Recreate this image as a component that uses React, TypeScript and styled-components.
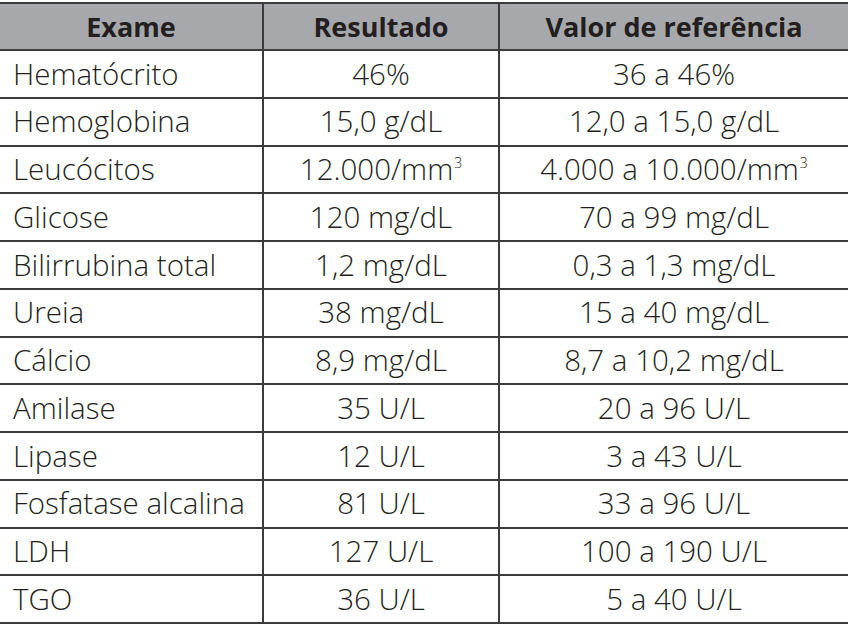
import React from "react";
import styled, { createGlobalStyle } from "styled-components";

const Global = createGlobalStyle`
  html, body { margin: 0; padding: 0; background: #ffffff; }
  body { font-family: "Open Sans", "Noto Sans", sans-serif; }
`;

const Page = styled.div`
  padding-top: 2px;
`;

const Table = styled.table`
  width: 848px;
  border-collapse: collapse;
  table-layout: fixed;
  color: #231f20;
`;

const HeadCell = styled.th`
  background: #a7a8ab;
  font-size: 27px;
  font-weight: 700;
  height: 45px;
  padding: 0;
  text-align: center;
  border-top: 2px solid #3b3b3b;
  border-bottom: 2px solid #3b3b3b;
  & + & { border-left: 2px solid #3b3b3b; }
`;

const Cell = styled.td<{ $left?: boolean }>`
  height: 45.75px;
  padding: 0 0 0 ${(p) => (p.$left ? "13px" : "0")};
  text-align: ${(p) => (p.$left ? "left" : "center")};
  font-size: 29.5px;
  font-weight: 300;
  line-height: 1.3;
  border-bottom: 2px solid #3b3b3b;
  & + & { border-left: 2px solid #3b3b3b; }
  white-space: nowrap;
`;

const Sup = styled.sup`
  font-size: 14px;
  vertical-align: 12px;
  line-height: 0;
  margin-left: 1px;
`;

const rows: [string, React.ReactNode, React.ReactNode][] = [
  ["Hematócrito", "46%", "36 a 46%"],
  ["Hemoglobina", "15,0 g/dL", "12,0 a 15,0 g/dL"],
  [
    "Leucócitos",
    <>12.000/mm<Sup>3</Sup></>,
    <>4.000 a 10.000/mm<Sup>3</Sup></>,
  ],
  ["Glicose", "120 mg/dL", "70 a 99 mg/dL"],
  ["Bilirrubina total", "1,2 mg/dL", "0,3 a 1,3 mg/dL"],
  ["Ureia", "38 mg/dL", "15 a 40 mg/dL"],
  ["Cálcio", "8,9 mg/dL", "8,7 a 10,2 mg/dL"],
  ["Amilase", "35 U/L", "20 a 96 U/L"],
  ["Lipase", "12 U/L", "3 a 43 U/L"],
  ["Fosfatase alcalina", "81 U/L", "33 a 96 U/L"],
  ["LDH", "127 U/L", "100 a 190 U/L"],
  ["TGO", "36 U/L", "5 a 40 U/L"],
];

export default function App() {
  return (
    <Page>
      <Global />
      <Table>
        <colgroup>
          <col style={{ width: 263 }} />
          <col style={{ width: 236 }} />
          <col style={{ width: 349 }} />
        </colgroup>
        <thead>
          <tr>
            <HeadCell>Exame</HeadCell>
            <HeadCell>Resultado</HeadCell>
            <HeadCell>Valor de referência</HeadCell>
          </tr>
        </thead>
        <tbody>
          {rows.map(([a, b, c]) => (
            <tr key={a}>
              <Cell $left>{a}</Cell>
              <Cell>{b}</Cell>
              <Cell>{c}</Cell>
            </tr>
          ))}
        </tbody>
      </Table>
    </Page>
  );
}
